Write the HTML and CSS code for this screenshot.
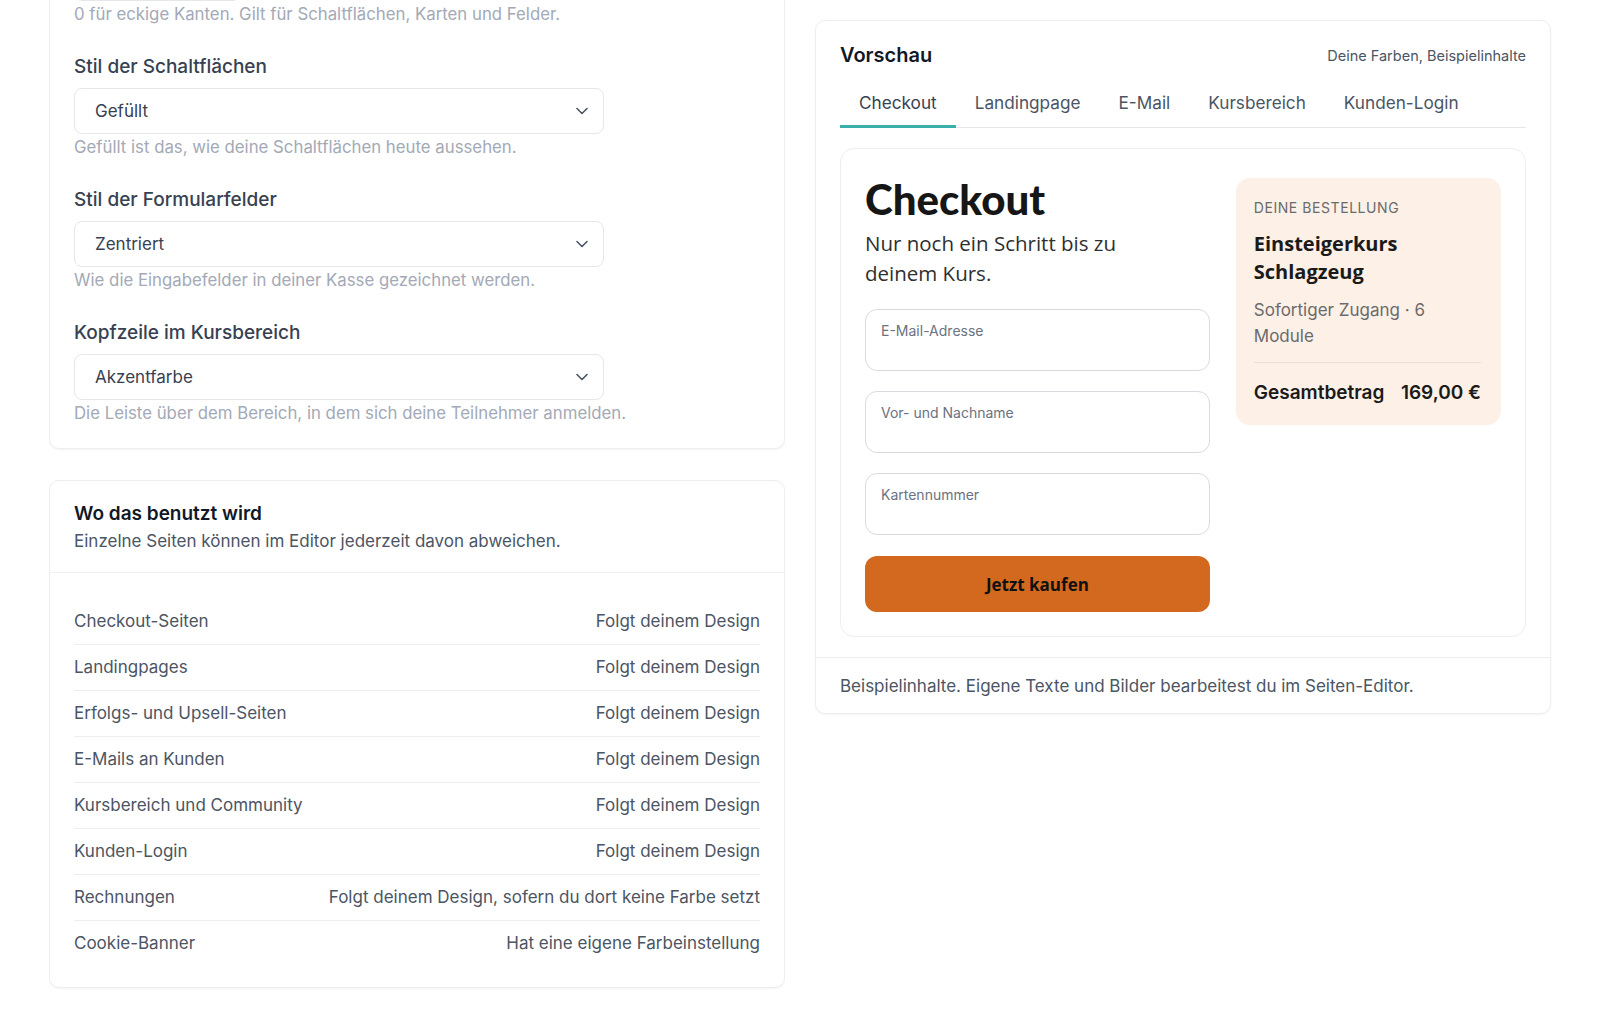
FILE: index.html
```html
<!DOCTYPE html>
<html lang="de">
<head>
    <meta charset="utf-8">
    <meta name="viewport" content="width=device-width, initial-scale=1.0">
    <title>Design</title>
    <link rel="stylesheet" href="styles.css">
</head>
<body>
    <div class="page">
        <div class="settings">
            <div class="page-head">
                <h1>Design</h1>
                <p>Farben, Schrift und Formen für alle Seiten deines Shops.</p>
            </div>
            <div class="card card-pad">
                <div class="field">
                    <div class="label">Akzentfarbe</div>
                    <div class="small-input"><span class="swatch"></span>#D2691E</div>
                    <div class="hint">Für Schaltflächen, Links und Hervorhebungen.</div>
                </div>
                <div class="field">
                    <div class="label">Schriftart</div>
                    <div class="select">
                        <span>Poppins</span>
                        <svg width="12" height="8" viewBox="0 0 12 8"><polyline points="1,1.5 6,6.5 11,1.5" fill="none" stroke="#4b5563" stroke-width="1.6" stroke-linecap="round" stroke-linejoin="round"/></svg>
                    </div>
                    <div class="hint">Gilt für Überschriften und Fließtext.</div>
                </div>
                <div class="field">
                    <div class="label">Eckenradius</div>
                    <div class="small-input">14 px</div>
                    <div class="hint radius-hint">0 für eckige Kanten. Gilt für Schaltflächen, Karten und Felder.</div>
                </div>
                <div class="field">
                    <div class="label">Stil der Schaltflächen</div>
                    <div class="select">
                        <span>Gefüllt</span>
                        <svg width="12" height="8" viewBox="0 0 12 8"><polyline points="1,1.5 6,6.5 11,1.5" fill="none" stroke="#4b5563" stroke-width="1.6" stroke-linecap="round" stroke-linejoin="round"/></svg>
                    </div>
                    <div class="hint">Gefüllt ist das, wie deine Schaltflächen heute aussehen.</div>
                </div>
                <div class="field">
                    <div class="label">Stil der Formularfelder</div>
                    <div class="select">
                        <span>Zentriert</span>
                        <svg width="12" height="8" viewBox="0 0 12 8"><polyline points="1,1.5 6,6.5 11,1.5" fill="none" stroke="#4b5563" stroke-width="1.6" stroke-linecap="round" stroke-linejoin="round"/></svg>
                    </div>
                    <div class="hint">Wie die Eingabefelder in deiner Kasse gezeichnet werden.</div>
                </div>
                <div class="field">
                    <div class="label">Kopfzeile im Kursbereich</div>
                    <div class="select">
                        <span>Akzentfarbe</span>
                        <svg width="12" height="8" viewBox="0 0 12 8"><polyline points="1,1.5 6,6.5 11,1.5" fill="none" stroke="#4b5563" stroke-width="1.6" stroke-linecap="round" stroke-linejoin="round"/></svg>
                    </div>
                    <div class="hint">Die Leiste über dem Bereich, in dem sich deine Teilnehmer anmelden.</div>
                </div>
            </div>

            <div class="card">
                <div class="usage-head">
                    <h2>Wo das benutzt wird</h2>
                    <p>Einzelne Seiten können im Editor jederzeit davon abweichen.</p>
                </div>
                <div class="usage-list">
                    <div class="usage-row"><span>Checkout-Seiten</span><span>Folgt deinem Design</span></div>
                    <div class="usage-row"><span>Landingpages</span><span>Folgt deinem Design</span></div>
                    <div class="usage-row"><span>Erfolgs- und Upsell-Seiten</span><span>Folgt deinem Design</span></div>
                    <div class="usage-row"><span>E-Mails an Kunden</span><span>Folgt deinem Design</span></div>
                    <div class="usage-row"><span>Kursbereich und Community</span><span>Folgt deinem Design</span></div>
                    <div class="usage-row"><span>Kunden-Login</span><span>Folgt deinem Design</span></div>
                    <div class="usage-row"><span>Rechnungen</span><span>Folgt deinem Design, sofern du dort keine Farbe setzt</span></div>
                    <div class="usage-row"><span>Cookie-Banner</span><span>Hat eine eigene Farbeinstellung</span></div>
                </div>
            </div>
        </div>

        <div class="preview-col">
            <div class="card preview">
                <div class="preview-head">
                    <h2>Vorschau</h2>
                    <span class="preview-note">Deine Farben, Beispielinhalte</span>
                </div>
                <div class="tabs">
                    <div class="tab active">Checkout</div>
                    <div class="tab">Landingpage</div>
                    <div class="tab">E-Mail</div>
                    <div class="tab">Kursbereich</div>
                    <div class="tab">Kunden-Login</div>
                </div>
                <div class="stage">
                    <div class="checkout">
                        <h3>Checkout</h3>
                        <p class="lead">Nur noch ein Schritt bis zu deinem Kurs.</p>
                        <div class="inputs">
                            <div class="input">E-Mail-Adresse</div>
                            <div class="input">Vor- und Nachname</div>
                            <div class="input">Kartennummer</div>
                        </div>
                        <div class="buy">Jetzt kaufen</div>
                    </div>
                    <div class="summary">
                        <div class="summary-kicker">Deine Bestellung</div>
                        <div class="summary-title">Einsteigerkurs Schlagzeug</div>
                        <div class="summary-meta">Sofortiger Zugang · 6 Module</div>
                        <div class="summary-total"><span>Gesamtbetrag</span><span>169,00 €</span></div>
                    </div>
                </div>
                <div class="preview-foot">Beispielinhalte. Eigene Texte und Bilder bearbeitest du im Seiten-Editor.</div>
            </div>
        </div>
    </div>
    <script>
        // the settings pane scrolls on its own; open it at the button/field styles
        let settings = document.querySelector(".settings");
        function jumpToStyles(){
            let hint = document.querySelector(".radius-hint");
            settings.scrollTop += hint.getBoundingClientRect().top - 3;
        }
        jumpToStyles();
        window.addEventListener("load", jumpToStyles);
    </script>
</body>
</html>
```

FILE: styles.css
```css
*{
    box-sizing: border-box;
}
html, body{
    height: 100%;
}
body{
    margin: 0;
    overflow: hidden;
    background-color: #fff;
    font-family: Inter, "Noto Sans", sans-serif;
    color: #111827;
}
.page{
    height: 100%;
    padding: 0 49px;
    display: grid;
    grid-template-columns: 1fr 1fr;
    gap: 30px;
}
.settings{
    height: 100%;
    overflow-y: auto;
    scrollbar-width: none;
    display: flex;
    flex-direction: column;
    gap: 31px;
    padding: 24px 0 40px;
}
.settings::-webkit-scrollbar{
    display: none;
}
.page-head h1{
    margin: 0;
    font-size: 26px;
    font-weight: 700;
}
.page-head p{
    margin: 4px 0 0;
    font-size: 16px;
    color: #6b7280;
}
.card{
    flex-shrink: 0;
    background-color: #fff;
    border: 1px solid #eceef1;
    border-radius: 10px;
    box-shadow: 0 1px 2px rgba(16,24,40,0.05);
}
.card-pad{
    padding: 24px;
}

/* settings fields */
.field + .field{
    margin-top: 30px;
}
.label{
    font-size: 19px;
    line-height: 24px;
    font-weight: 500;
    color: #374151;
    margin-bottom: 9px;
}
.select{
    width: 530px;
    height: 46px;
    border: 1px solid #e5e7eb;
    border-radius: 8px;
    padding: 0 15px 0 20px;
    display: flex;
    align-items: center;
    justify-content: space-between;
    font-size: 17px;
    color: #374151;
}
.small-input{
    width: 167px;
    height: 46px;
    border: 1px solid #e5e7eb;
    border-radius: 8px;
    padding: 0 14px;
    display: flex;
    align-items: center;
    gap: 10px;
    font-size: 17px;
    color: #374151;
}
.swatch{
    width: 22px;
    height: 22px;
    border-radius: 5px;
    background-color: #d2691e;
}
.hint{
    margin-top: 2px;
    font-size: 16.8px;
    line-height: 22px;
    color: #a3a9b6;
}

/* where it is used */
.usage-head{
    padding: 20px 24px 19px;
    border-bottom: 1px solid #eef0f2;
}
.usage-head h2{
    margin: 0;
    font-size: 19px;
    line-height: 26px;
    font-weight: 600;
    color: #111827;
}
.usage-head p{
    margin: 2px 0 0;
    font-size: 17px;
    line-height: 24px;
    color: #4b5563;
}
.usage-list{
    padding: 26px 24px 21px;
}
.usage-row{
    display: flex;
    justify-content: space-between;
    padding: 11px 0;
    font-size: 17px;
    line-height: 23px;
    color: #4b5563;
    border-bottom: 1px solid #eceef1;
}
.usage-row:last-child{
    border-bottom: none;
}

/* preview */
.preview-col{
    padding-top: 20px;
}
.preview-head{
    padding: 21px 24px 0;
    display: flex;
    justify-content: space-between;
    align-items: center;
}
.preview-head h2{
    margin: 0;
    font-size: 20px;
    line-height: 26px;
    font-weight: 600;
}
.preview-note{
    font-size: 14.5px;
    color: #4b5563;
}
.tabs{
    margin: 11px 24px 0;
    display: flex;
    border-bottom: 1px solid #e5e7eb;
}
.tab{
    padding: 12px 19px 10px;
    line-height: 24px;
    font-size: 17.2px;
    color: #4b5563;
    border-bottom: 3px solid transparent;
    margin-bottom: -1px;
}
.tab.active{
    color: #374151;
    border-bottom-color: #3aafa9;
}
.stage{
    margin: 20px 24px;
    border: 1px solid #eceef1;
    border-radius: 14px;
    padding: 29px 24px 24px;
    display: grid;
    grid-template-columns: 1.3fr 1fr;
    gap: 26px;
    align-items: start;
}
.checkout h3{
    margin: 0;
    font-family: Lato, "Open Sans", sans-serif;
    font-size: 42px;
    line-height: 42px;
    font-weight: 900;
    color: #161616;
}
.lead{
    margin: 8px 0 0;
    max-width: 300px;
    font-family: "Open Sans", sans-serif;
    font-size: 20.5px;
    line-height: 30px;
    color: #2f2f2f;
}
.inputs{
    margin-top: 21px;
    display: flex;
    flex-direction: column;
    gap: 20px;
}
.input{
    height: 62px;
    border: 1px solid #d9dadf;
    border-radius: 12px;
    padding: 12px 15px;
    font-size: 14px;
    line-height: 18px;
    color: #6b7280;
}
.buy{
    margin-top: 21px;
    height: 56px;
    border-radius: 12px;
    background-color: #d2691e;
    display: flex;
    align-items: center;
    justify-content: center;
    font-family: "Open Sans", sans-serif;
    font-size: 17px;
    font-weight: 700;
    color: #111;
}
.summary{
    background-color: #fcf0e7;
    border-radius: 14px;
    padding: 20px 20px 18px 18px;
}
.summary-kicker{
    font-size: 14px;
    line-height: 20px;
    letter-spacing: 0.04em;
    text-transform: uppercase;
    color: #6b6b6b;
}
.summary-title{
    margin-top: 12px;
    font-family: "Open Sans", sans-serif;
    font-size: 20px;
    line-height: 28px;
    font-weight: 700;
    color: #1a1a1a;
}
.summary-meta{
    margin-top: 11px;
    padding-bottom: 13px;
    border-bottom: 1px solid #eadfd6;
    font-size: 17px;
    line-height: 26px;
    color: #6b6b6b;
}
.summary-total{
    padding-top: 16px;
    display: flex;
    justify-content: space-between;
    font-size: 19px;
    line-height: 28px;
    font-weight: 600;
    color: #1a1a1a;
}
.preview-foot{
    border-top: 1px solid #eceef1;
    padding: 16px 24px 15px;
    font-size: 17px;
    line-height: 24px;
    color: #4b5563;
}
```
